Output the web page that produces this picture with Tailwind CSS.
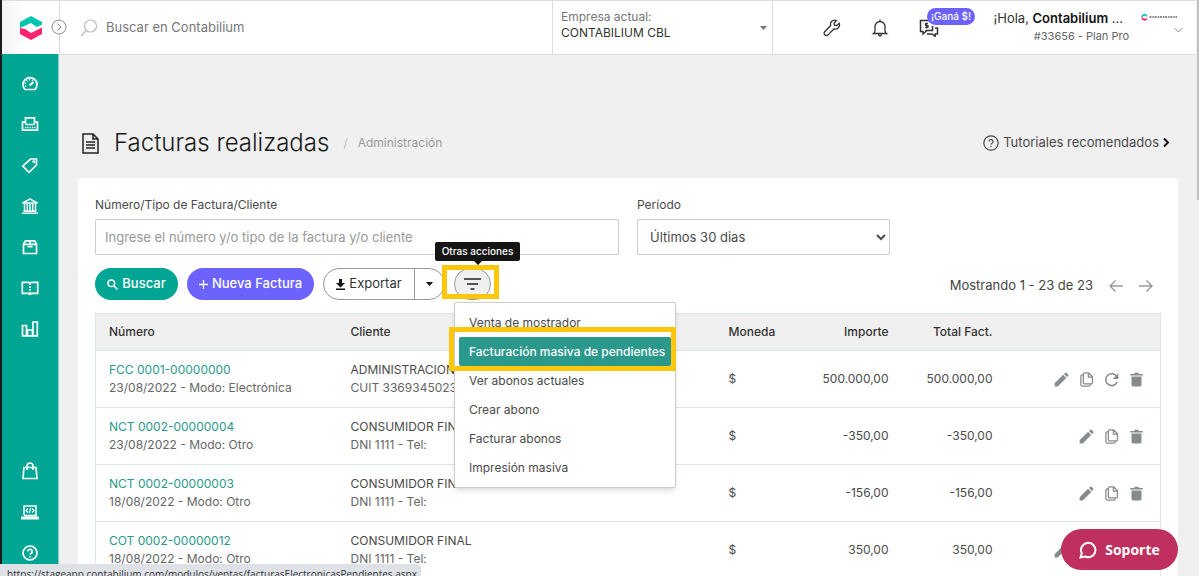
<!DOCTYPE html>
<html lang="es">

<head>
    <meta charset="utf-8">
    <title>Contabilium - Facturas realizadas</title>
    <meta content="width=device-width, initial-scale=1.0" name="viewport">

    <!-- Tailwind CSS -->
    <script src="https://cdn.jsdelivr.net/npm/@tailwindcss/browser@4"></script>
</head>

<body class="flex h-screen overflow-hidden border-l-2 border-[#1b1b1b] bg-[#f0f0f0] font-['Inter',sans-serif] text-xs text-[#4a4a4a]">

    <!-- Icons -->
    <svg class="hidden">
        <symbol id="i-edit" viewBox="0 0 24 24"><path fill="currentColor" d="M1 23v-5L14.500 4.500l5 5L6 23zM16 3.200l2-2a1.500 1.500 0 0 1 2 0l2.800 2.800a1.500 1.500 0 0 1 0 2l-2 2z"/></symbol>
        <symbol id="i-copy" viewBox="0 0 24 24"><path fill="none" stroke="currentColor" stroke-width="2" d="M7 3.500Q7 1.500 9 1.500h6.500l6 6V17q0 2-2 2H9q-2 0-2-2zM15 2v6h6M7 4.500H5q-2 0-2 2V20q0 2.500 2.500 2.500H16q2 0 2-2V19"/></symbol>
        <symbol id="i-redo" viewBox="0 0 24 24"><path fill="none" stroke="currentColor" stroke-width="2.500" d="M20.500 7.500A9.500 9.500 0 1 0 21 16"/><path fill="currentColor" d="M23 2v9h-9z"/></symbol>
        <symbol id="i-trash" viewBox="0 0 24 24"><path fill="currentColor" d="M2 3h6l1.500-2h5L16 3h6v2.500H2zM4 7h16v13.500q0 2.500-2.500 2.500h-11Q4 23 4 20.500z"/></symbol>
    </svg>

    <!-- Sidebar Start -->
    <aside class="flex w-[57px] shrink-0 flex-col bg-[#00a693]">
        <a href="#" aria-label="Contabilium" class="flex h-[54px] shrink-0 items-center justify-center border-t border-[#ddd] bg-linear-to-r from-[#f3f3f3] to-white to-40%">
            <svg class="h-6 w-[22px]" viewBox="0 0 22 24">
                <path fill="#00c4ae" d="M0 12V6L11 0l11 6v2.500L17 11l-6-4z"/>
                <path fill="#ff2370" d="M0 12l5 1 6 4 11-5.500V18l-11 6L0 18z"/>
            </svg>
        </a>
        <nav class="flex flex-1 flex-col items-center justify-between border-r border-[#7fd0c6] pt-5 pb-3.5 text-white">
            <div class="flex flex-col gap-[23px]">
                <a href="#" aria-label="Tablero"><svg class="size-[18px]" viewBox="0 0 18 18" fill="none" stroke="currentColor" stroke-width="1.700"><path d="M4 15.500A7 7 0 1 1 14 15.500z"/><path stroke-width="2.200" d="M8.500 11.500l4-3.500"/><path stroke-dasharray="1.200 1.700" d="M5 12.500a4.400 4.400 0 0 1 7.500-5"/></svg></a>
                <a href="#" aria-label="Ventas"><svg class="size-[18px]" viewBox="0 0 18 18" fill="none" stroke="currentColor" stroke-width="1.700"><path d="M4.500 9V2.800h9V9M4 7H1.500v8.200h15V7H14M4.500 9.500h9"/><path stroke-width="1.400" stroke-dasharray="1.300 1" d="M4 12.500h10.500"/></svg></a>
                <a href="#" aria-label="Productos"><svg class="size-[18px]" viewBox="0 0 18 18" fill="none" stroke="currentColor" stroke-width="1.700"><path d="M9.500 3h6v6L8 16.300 1.800 10z"/><circle cx="12.800" cy="5.700" r=".6"/></svg></a>
                <a href="#" aria-label="Bancos"><svg class="size-[18px]" viewBox="0 0 18 18" fill="none" stroke="currentColor" stroke-width="1.500"><path d="M1.500 6L9 2l7.500 4zM1 16.300h16M2.500 14.300h13M3.500 7v7M6.300 7v7M9 7v7M11.700 7v7M14.500 7v7"/></svg></a>
                <a href="#" aria-label="Inventario"><svg class="size-[18px]" viewBox="0 0 18 18" fill="none" stroke="currentColor" stroke-width="1.700"><path d="M2.500 6l2-3.200h9l2 3.200v9.500h-13zM2.500 6.300h13M9 3v3M6.500 8.700h5"/></svg></a>
                <a href="#" aria-label="Contabilidad"><svg class="size-[18px]" viewBox="0 0 18 18" fill="none" stroke="currentColor" stroke-width="1.700"><path d="M1.300 3.300h6.200L9 4l1.500-.7h6.200v11h-6.200L9 15.500l-1.500-1.200H1.300z"/><path stroke-dasharray="1.600 1.200" d="M9 4.500v11"/></svg></a>
                <a href="#" aria-label="Reportes"><svg class="size-[18px]" viewBox="0 0 18 18" fill="none" stroke="currentColor" stroke-width="1.700"><path d="M1.500 5.500h4v10.300h-4zM6.500 10h5v5.800h-5zM12 2h4.300v13.800H12z"/></svg></a>
            </div>
            <div class="flex flex-col gap-[23px]">
                <a href="#" aria-label="Tienda"><svg class="size-[18px]" viewBox="0 0 18 18" fill="none" stroke="currentColor" stroke-width="1.700"><path d="M3 5.500h12l1 11H2zM6 8V4a3 3 0 0 1 6 0v4"/></svg></a>
                <a href="#" aria-label="Integraciones"><svg class="size-[18px]" viewBox="0 0 18 18" fill="none" stroke="currentColor" stroke-width="1.500"><path d="M3 12V3h12v9.500H3M.800 14.200h16.400v1.500H.800z"/><path stroke-width="1.200" d="M7 5.500L5 7.500l2 2M11 5.500l2 2-2 2M9.700 5l-1.400 5"/></svg></a>
                <a href="#" aria-label="Ayuda"><svg class="size-[18px]" viewBox="0 0 18 18" fill="none" stroke="currentColor" stroke-width="1.700"><circle cx="9" cy="9" r="7"/><path d="M6.800 7.500a2.200 2.200 0 1 1 3.200 2q-1 .5-1 1.300M9 12v1.500"/></svg></a>
            </div>
        </nav>
    </aside>
    <!-- Sidebar End -->

    <div class="flex min-w-0 flex-1 flex-col">

        <!-- Navbar Start -->
        <header class="relative flex h-[55px] shrink-0 border-y border-[#ddd] bg-white">
            <button type="button" aria-label="Expandir menú" class="absolute top-[18px] -left-2 z-10 rounded-full bg-white">
                <svg class="size-4" viewBox="0 0 16 16" fill="none" stroke="#888"><circle cx="8" cy="8" r="7"/><path d="M6.500 4.500L10 8l-3.500 3.500"/></svg>
            </button>
            <label class="flex min-w-0 flex-1 items-center gap-2 border-l border-[#ddd] pl-5">
                <svg class="size-[18px] shrink-0" viewBox="0 0 18 18" fill="none" stroke="#bbb" stroke-width="1.200"><circle cx="10.500" cy="7" r="6"/><path d="M6.300 11.500L1 17"/></svg>
                <input type="search" placeholder="Buscar en Contabilium" class="w-full text-[13px] outline-none placeholder:text-[#777]">
            </label>
            <div class="flex w-[221px] shrink-0 items-center justify-between border-x border-[#ddd] pr-[5px] pl-2">
                <div class="pb-1.5 leading-4">
                    <p class="text-[#777]">Empresa actual:</p>
                    <p class="text-[#333]">CONTABILIUM CBL</p>
                </div>
                <svg class="h-1 w-[7px]" viewBox="0 0 7 4"><path fill="#777" d="M0 0h7L3.500 4z"/></svg>
            </div>
            <div class="flex w-[426px] shrink-0 justify-between">
                <div class="flex items-center gap-[30px] pl-[50px] text-[#333]">
                    <a href="#" aria-label="Herramientas"><svg class="size-[18px]" viewBox="0 0 18 18" fill="none" stroke="currentColor" stroke-width="1.300"><path d="M16.300 4.300l-2.800 2.200-2-.3-.5-2L13.500 1.500q-3-1-5 1-1.600 1.700-.8 4L1.500 13q-1 1.500.3 2.800t3 .3l6.300-6.300q2.300.8 4-.8 2-2 1.200-4.700z"/></svg></a>
                    <a href="#" aria-label="Notificaciones"><svg class="size-[18px]" viewBox="0 0 18 18" fill="none" stroke="currentColor" stroke-width="1.300"><path d="M2.500 14.500q1.500-1 1.500-3V7.500a5 5 0 0 1 10 0v4q0 2 1.500 3zM9 2.500V.5M7.500 15q0 2 1.500 2t1.500-2"/></svg></a>
                    <a href="#" class="relative" aria-label="Referidos">
                        <svg class="h-[18px] w-5" viewBox="0 0 20 18" fill="none" stroke="currentColor" stroke-width="1.500"><path d="M10 1.500H1.500v11H4V15l3-2.500V11M13.500 7v4.500H7M16 9h2.500v6h-2.300v2.300L13 15H8"/><path stroke-width="1.200" d="M9 4.500H6.500v2H9v2H6M7.700 3.500v6"/></svg>
                        <span class="absolute -top-[11px] left-2 rounded-full bg-[#6c63ff] px-1 text-[10px] leading-[17px] font-medium whitespace-nowrap text-white">¡Ganá $!</span>
                    </a>
                </div>
                <div class="flex pr-[22px]">
                    <div class="pt-2">
                        <p class="text-[13px] leading-[18px] text-[#333]">¡Hola, <b class="font-semibold text-[#111]">Contabilium</b> ...</p>
                        <p class="-mr-1.5 text-right text-[11px] leading-[18px] text-[#666]">#33656 - Plan Pro</p>
                    </div>
                    <div class="ml-[18px] flex flex-col items-end pt-3">
                        <svg class="h-2 w-9" viewBox="0 0 36 8"><path fill="none" stroke="#00c4ae" stroke-width="1.500" d="M1.200 4V3L3.500 1.500 6 3"/><path fill="none" stroke="#ff2370" stroke-width="1.500" d="M1.200 4.500v1L3.500 7 6 5.500"/><path stroke="#888" stroke-width="2" stroke-dasharray="2 1 1.500 .7" d="M8.500 4H36"/></svg>
                        <svg class="mt-1.5 -mr-1.5 h-1.5 w-[9px]" viewBox="0 0 9 6" fill="none" stroke="#888"><path d="M.5 1l4 4 4-4"/></svg>
                    </div>
                </div>
            </div>
        </header>
        <!-- Navbar End -->

        <main class="flex min-h-0 flex-1 flex-col pt-[72px] pr-[21px] pl-[19px]">

            <!-- Title Start -->
            <div class="flex h-8 shrink-0 items-center">
                <svg class="mx-1 h-[21px] w-[17px]" viewBox="0 0 17 21" fill="none" stroke="#222" stroke-width="1.500"><path d="M1 1h10l5 5v14H1zM11 1v5h5"/><path d="M4 9h9M4 12h9M4 15h9"/></svg>
                <h1 class="ml-[11px] text-2xl font-light text-[#1b1b1b]">Facturas realizadas</h1>
                <p class="ml-3.5 text-[#999]"><span class="mr-2.5 text-[#bbb]">/</span>Administración</p>
                <a href="#" class="mr-2 ml-auto flex items-center gap-1 text-[13px]">
                    <svg class="size-4" viewBox="0 0 16 16" fill="none" stroke="currentColor" stroke-width="1.200"><circle cx="8" cy="8" r="7.200"/><path d="M6 6.500a2 2 0 1 1 3 1.800q-1 .5-1 1.500M8 11v1.300"/></svg>
                    Tutoriales recomendados
                    <svg class="h-[9px] w-[7px]" viewBox="0 0 7 9" fill="none" stroke="#111" stroke-width="2"><path d="M1 .5l4 4-4 4"/></svg>
                </a>
            </div>
            <!-- Title End -->

            <div class="mt-[19px] flex-1 rounded-t bg-white px-[17px] pt-4">

                <!-- Filters Start -->
                <form class="grid grid-cols-4 gap-x-[18px]">
                    <div class="col-span-2">
                        <label for="search" class="mb-[3px] block leading-[22px]">Número/Tipo de Factura/Cliente</label>
                        <input id="search" type="text" placeholder="Ingrese el número y/o tipo de la factura y/o cliente" class="h-9 w-full rounded-xs border border-[#ccc] px-[9px] text-[13px] placeholder:text-[#999]">
                    </div>
                    <div>
                        <label for="period" class="mb-[3px] block leading-[22px]">Período</label>
                        <select id="period" class="h-9 w-full rounded-xs border border-[#ccc] bg-white pl-2 text-[13px]">
                            <option>Últimos 30 dias</option>
                        </select>
                    </div>
                </form>
                <!-- Filters End -->

                <!-- Actions Start -->
                <div class="mt-[13px] flex h-8 items-center text-[13px]">
                    <button type="button" class="flex h-8 w-[83px] items-center justify-center gap-1 rounded-full bg-[#00a693] font-medium text-white">
                        <svg class="size-[11px]" viewBox="0 0 11 11" fill="none" stroke="currentColor" stroke-width="1.500"><circle cx="4.300" cy="4.300" r="3.300"/><path d="M6.800 6.800L10.500 10.500"/></svg>
                        Buscar
                    </button>
                    <button type="button" class="ml-[9px] flex h-8 w-[127px] items-center justify-center gap-1 rounded-full bg-[#6c63ff] font-medium text-white">
                        <svg class="size-[9px]" viewBox="0 0 9 9" stroke="currentColor" stroke-width="1.300"><path d="M4.500 0v9M0 4.500h9"/></svg>
                        Nueva Factura
                    </button>
                    <div class="ml-[9px] flex h-8 rounded-full border border-[#999]">
                        <button type="button" class="flex w-[91px] items-center justify-center gap-1 border-r border-[#999] text-[#333]">
                            <svg class="h-[11px] w-[9px]" viewBox="0 0 9 11" fill="#111"><path d="M3 0h3v4h3L4.500 8.500 0 4h3zM0 9.500h9V11H0z"/></svg>
                            Exportar
                        </button>
                        <button type="button" aria-label="Más formatos" class="flex w-[29px] items-center justify-center">
                            <svg class="h-1 w-[7px]" viewBox="0 0 7 4"><path fill="#111" d="M0 0h7L3.500 4z"/></svg>
                        </button>
                    </div>
                    <div class="relative ml-[9px]">
                        <button type="button" aria-label="Otras acciones" class="flex h-8 w-[37px] items-center justify-center rounded-full border border-[#999] bg-[#f0f0f0]">
                            <svg class="h-3 w-[17px]" viewBox="0 0 17 12" stroke="#222" stroke-width="1.600"><path d="M0 1h17M3 6h11M6.500 11h4"/></svg>
                        </button>
                        <span class="absolute -top-[3px] -left-3 z-10 h-[34px] w-[57px] border-5 border-[#ffc60e]"></span>

                        <!-- Tooltip -->
                        <div role="tooltip" class="absolute -top-[26px] -left-[19px] z-20 flex h-[19px] w-[85px] items-center justify-center rounded-xs bg-[#141414] text-[10px] font-medium whitespace-nowrap text-white">
                            Otras acciones
                            <svg class="absolute top-full h-1 w-2" viewBox="0 0 8 4"><path fill="#141414" d="M0 0h8L4 4z"/></svg>
                        </div>

                        <!-- Dropdown -->
                        <ul class="absolute top-[34px] left-0 z-10 w-[222px] rounded-xs border border-[#ccc] bg-white px-1 py-[5px] text-xs leading-[29px] shadow-md">
                            <li><a href="#" class="block px-2.5">Venta de mostrador</a></li>
                            <li class="relative">
                                <a href="#" class="block rounded-xs bg-[#2a998c] px-2.5 font-medium whitespace-nowrap text-white">Facturación masiva de pendientes</a>
                                <span class="absolute -top-2.5 -right-[5px] -bottom-[5px] -left-2.5 border-5 border-[#ffc60e]"></span>
                            </li>
                            <li><a href="#" class="block px-2.5">Ver abonos actuales</a></li>
                            <li><a href="#" class="block px-2.5">Crear abono</a></li>
                            <li><a href="#" class="block px-2.5">Facturar abonos</a></li>
                            <li><a href="#" class="block px-2.5">Impresión masiva</a></li>
                        </ul>
                    </div>
                    <div class="ml-auto flex items-center gap-4 pt-1 pr-2 text-[#999]">
                        <span class="text-[#444]">Mostrando 1 - 23 de 23</span>
                        <button type="button" aria-label="Anterior"><svg class="h-3 w-3.5" viewBox="0 0 14 12" fill="none" stroke="currentColor" stroke-width="1.400"><path d="M14 6H1M6.500.5L1 6l5.500 5.500"/></svg></button>
                        <button type="button" aria-label="Siguiente"><svg class="h-3 w-3.5" viewBox="0 0 14 12" fill="none" stroke="currentColor" stroke-width="1.400"><path d="M0 6h13M7.500.5L13 6l-5.500 5.500"/></svg></button>
                    </div>
                </div>
                <!-- Actions End -->

                <!-- Table Start -->
                <table class="mt-[13px] w-full table-fixed border-collapse border border-[#dfe6ea] leading-[18px]">
                    <thead class="bg-[#f0f0f0] text-[#333]">
                        <tr class="h-[37px] border-b border-[#dfe6ea]">
                            <th class="w-[242px] px-[13px] text-left font-medium">Número</th>
                            <th class="px-[13px] text-left font-medium">Cliente</th>
                            <th class="w-20 px-3.5 text-left font-medium">Moneda</th>
                            <th class="w-[107px] px-[13px] text-right font-medium">Importe</th>
                            <th class="w-[104px] px-[13px] text-right font-medium whitespace-nowrap">Total Fact.</th>
                            <th class="w-[155px]"></th>
                        </tr>
                    </thead>
                    <tbody>
                        <tr class="h-[57px] border-b border-[#dfe6ea]">
                            <td class="px-[13px]"><a href="#" class="text-[#2a998c]">FCC 0001-00000000</a><p class="text-[#666]">23/08/2022 - Modo: Electrónica</p></td>
                            <td class="px-[13px]"><p>ADMINISTRACION</p><p class="text-[#666]">CUIT 33693450239</p></td>
                            <td class="px-3.5">$</td>
                            <td class="px-[13px] text-right">500.000,00</td>
                            <td class="px-[13px] text-right">500.000,00</td>
                            <td class="pr-4">
                                <div class="flex justify-end gap-2.5 text-[#868b8e]">
                                    <button type="button" aria-label="Editar"><svg class="size-[15px]"><use href="#i-edit"/></svg></button>
                                    <button type="button" aria-label="Duplicar"><svg class="size-[15px]"><use href="#i-copy"/></svg></button>
                                    <button type="button" aria-label="Reintentar"><svg class="size-[15px]"><use href="#i-redo"/></svg></button>
                                    <button type="button" aria-label="Eliminar"><svg class="size-[15px]"><use href="#i-trash"/></svg></button>
                                </div>
                            </td>
                        </tr>
                        <tr class="h-[57px] border-b border-[#dfe6ea]">
                            <td class="px-[13px]"><a href="#" class="text-[#2a998c]">NCT 0002-00000004</a><p class="text-[#666]">23/08/2022 - Modo: Otro</p></td>
                            <td class="px-[13px]"><p>CONSUMIDOR FINAL</p><p class="text-[#666]">DNI 1111 - Tel:</p></td>
                            <td class="px-3.5">$</td>
                            <td class="px-[13px] text-right">-350,00</td>
                            <td class="px-[13px] text-right">-350,00</td>
                            <td class="pr-4">
                                <div class="flex justify-end gap-2.5 text-[#868b8e]">
                                    <button type="button" aria-label="Editar"><svg class="size-[15px]"><use href="#i-edit"/></svg></button>
                                    <button type="button" aria-label="Duplicar"><svg class="size-[15px]"><use href="#i-copy"/></svg></button>
                                    <button type="button" aria-label="Eliminar"><svg class="size-[15px]"><use href="#i-trash"/></svg></button>
                                </div>
                            </td>
                        </tr>
                        <tr class="h-[57px] border-b border-[#dfe6ea]">
                            <td class="px-[13px]"><a href="#" class="text-[#2a998c]">NCT 0002-00000003</a><p class="text-[#666]">18/08/2022 - Modo: Otro</p></td>
                            <td class="px-[13px]"><p>CONSUMIDOR FINAL</p><p class="text-[#666]">DNI 1111 - Tel:</p></td>
                            <td class="px-3.5">$</td>
                            <td class="px-[13px] text-right">-156,00</td>
                            <td class="px-[13px] text-right">-156,00</td>
                            <td class="pr-4">
                                <div class="flex justify-end gap-2.5 text-[#868b8e]">
                                    <button type="button" aria-label="Editar"><svg class="size-[15px]"><use href="#i-edit"/></svg></button>
                                    <button type="button" aria-label="Duplicar"><svg class="size-[15px]"><use href="#i-copy"/></svg></button>
                                    <button type="button" aria-label="Eliminar"><svg class="size-[15px]"><use href="#i-trash"/></svg></button>
                                </div>
                            </td>
                        </tr>
                        <tr class="h-[57px] border-b border-[#dfe6ea]">
                            <td class="px-[13px]"><a href="#" class="text-[#2a998c]">COT 0002-00000012</a><p class="text-[#666]">18/08/2022 - Modo: Otro</p></td>
                            <td class="px-[13px]"><p>CONSUMIDOR FINAL</p><p class="text-[#666]">DNI 1111 - Tel:</p></td>
                            <td class="px-3.5">$</td>
                            <td class="px-[13px] text-right">350,00</td>
                            <td class="px-[13px] text-right">350,00</td>
                            <td class="pr-4">
                                <div class="flex justify-end gap-2.5 text-[#868b8e]">
                                    <button type="button" aria-label="Editar"><svg class="size-[15px]"><use href="#i-edit"/></svg></button>
                                    <button type="button" aria-label="Duplicar"><svg class="size-[15px]"><use href="#i-copy"/></svg></button>
                                    <button type="button" aria-label="Reintentar"><svg class="size-[15px]"><use href="#i-redo"/></svg></button>
                                    <button type="button" aria-label="Eliminar"><svg class="size-[15px]"><use href="#i-trash"/></svg></button>
                                </div>
                            </td>
                        </tr>
                    </tbody>
                </table>
                <!-- Table End -->
            </div>
        </main>
    </div>

    <!-- Scrollbar -->
    <div class="fixed inset-y-0 right-0 w-[3px] bg-[#f0f0f0]">
        <div class="ml-px h-[200px] bg-[#c1c1c1]"></div>
    </div>

    <!-- Support -->
    <button type="button" class="fixed right-[21px] bottom-1.5 z-30 flex h-[41px] w-[117px] items-center justify-center gap-2 rounded-full bg-[#c0305f] font-['Open_Sans',sans-serif] text-sm font-bold text-white">
        <svg class="size-[18px]" viewBox="0 0 18 18" fill="none" stroke="currentColor" stroke-width="2"><path d="M1.500 16.500l1.300-4.200a7.200 7.200 0 1 1 3.200 3.200z"/></svg>
        Soporte
    </button>

    <!-- Link preview -->
    <div class="fixed top-[564px] left-0 z-30 h-5 w-[421px] rounded-tr bg-[#dee1e6] pl-[7px] font-['Open_Sans',sans-serif] text-[10px] leading-5 whitespace-nowrap text-[#333]">https://stageapp.contabilium.com/modulos/ventas/facturasElectronicasPendientes.aspx</div>

</body>

</html>
